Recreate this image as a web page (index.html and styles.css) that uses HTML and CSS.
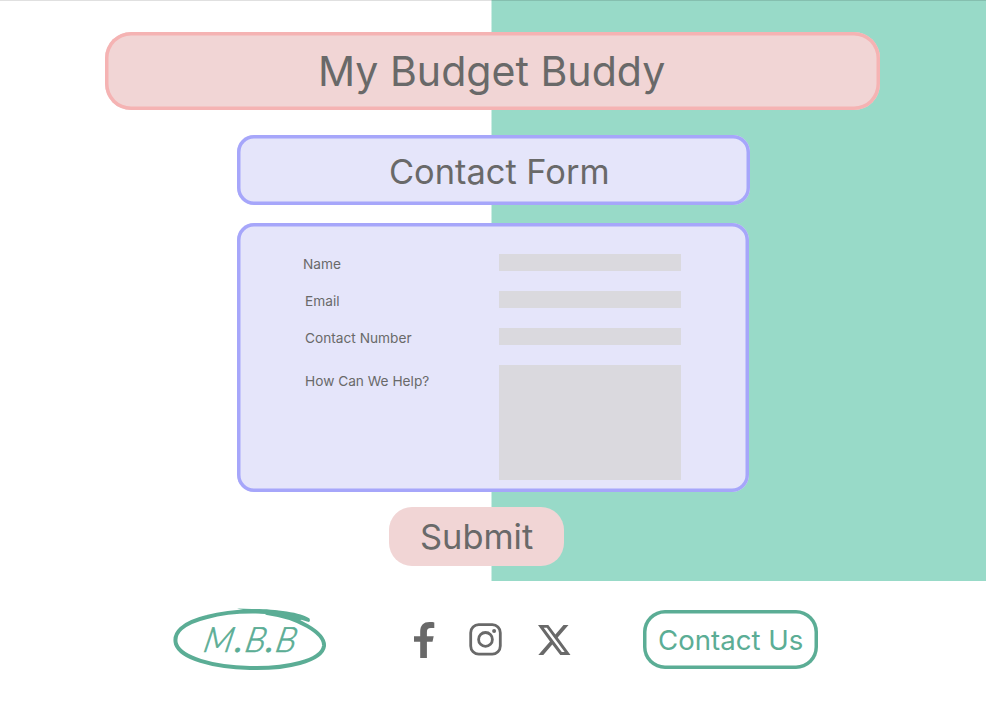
FILE: index.html
```html
<!DOCTYPE html>
<html lang="en">
<head>
<meta charset="utf-8">
<title>My Budget Buddy</title>
<link rel="stylesheet" href="styles.css">
</head>
<body>
<main class="hero">
  <h1 class="panel title"><span>My Budget Buddy</span></h1>
  <h2 class="panel subtitle"><span>Contact Form</span></h2>
  <form class="panel form">
    <label class="row"><span class="label name">Name</span><input class="field" type="text"></label>
    <label class="row"><span class="label email">Email</span><input class="field" type="text"></label>
    <label class="row"><span class="label number">Contact Number</span><input class="field" type="text"></label>
    <label class="row"><span class="label help">How Can We Help?</span><textarea class="field message"></textarea></label>
  </form>
  <button class="submit" type="button"><span>Submit</span></button>
</main>
<footer class="footer">
  <svg class="logo" width="160" height="70" viewBox="170 605 160 70" role="img" aria-label="M.B.B">
    <path class="ring" d="M300 618C278 610 235 609 207 617C182 623 173 633 176 644C181 658 212 667 250 668C286 669 322 661 324 646C325 633 298 617 267 613"/>
    <path class="brush" d="M237 608.5L252 609C270 608.5 302 612 309.5 618.5Q311 623 307 621.5C300 619 296 618 291 618.5C283 615.5 276 614.5 268 614Q249 612 237 608.5Z"/>
    <text class="initials" transform="translate(202 651.5) skewX(-12)"><tspan x="0">M</tspan><tspan class="stop" x="32">.</tspan><tspan x="41.5">B</tspan><tspan class="stop" x="63">.</tspan><tspan x="72">B</tspan></text>
  </svg>
  <nav class="social">
    <svg class="facebook" width="22" height="36" viewBox="0 0 22 36"><path d="M6.2 36V19.8H0v-5.6h6.2V10C6.2 3.3 9.4 0 15.5 0c2.3 0 3.8.1 4.8.4v5.5h-3.4c-3 0-4 1.1-4 4v4.3h6.8l-1.2 5.6h-5.6V36Z"/></svg>
    <svg class="instagram" width="34" height="34" viewBox="0 0 34 34"><rect x="1.7" y="1.7" width="29.6" height="29.4" rx="8"/><circle cx="16.5" cy="16.4" r="6.9"/><circle class="dot" cx="25.1" cy="7.9" r="2"/></svg>
    <svg class="x" width="33" height="30" viewBox="0 0 33 30"><path fill-rule="evenodd" d="M0 0h10.3l7.1 9.4L25.5 0h5L19.7 12.4 32.5 30H22.3l-8-10.4L5.3 30h-5l11.7-13.4ZM5.7 2.8l18.1 24.3h2.9L8.8 2.8Z"/></svg>
  </nav>
  <a class="contact"><span>Contact Us</span></a>
</footer>
</body>
</html>
```

FILE: styles.css
```css
* { box-sizing: border-box; }
body {
  margin: 0;
  width: 986px;
  height: 701px;
  overflow: hidden;
  background: #fff;
  color: #696969;
  font-family: Inter, "Liberation Sans", sans-serif;
  font-weight: 400;
}
.hero {
  display: flex;
  flex-direction: column;
  height: 581px;
  padding-top: 31px;
  border-top: 1px solid rgba(0, 0, 0, .12);
  background: linear-gradient(to right, #fff 491.2px, #98dac8 491.8px) border-box;
}
.panel {
  flex: none;
  margin: 0 0 0 237px;
  border-radius: 17px;
  background: #e5e5fa;
  box-shadow: inset 0 0 0 3.5px #a6a6fa;
  font-weight: 400;
  white-space: nowrap;
}
.title {
  width: 775px;
  height: 78px;
  margin-left: 105px;
  padding: 14px 0 0 213px;
  border-radius: 26px;
  background: #f1d5d5;
  box-shadow: inset 0 0 0 3.5px #f5b3b3;
  font-size: 41.1px;
  line-height: 50px;
}
.subtitle {
  width: 513px;
  height: 70px;
  margin-top: 25px;
  padding: 16px 0 0 152px;
  font-size: 34.4px;
  line-height: 42px;
}
.form {
  display: grid;
  grid-template-rows: 37px 37px 37px 115px;
  width: 512px;
  height: 269px;
  margin-top: 18px;
  padding-top: 31px;
  font-size: 13.7px;
}
.row { display: grid; grid-template-columns: 262px 182px; }
.label { padding-left: 68px; line-height: 20px; }
.name { padding-left: 66px; }
.help { padding-top: 6px; }
.field {
  width: 182px;
  height: 17px;
  padding: 0;
  border: 0;
  border-radius: 0;
  background: #dad9de;
  resize: none;
}
.message { height: 115px; }
.submit {
  flex: none;
  width: 175px;
  height: 59px;
  margin: 15px 0 0 389px;
  padding: 1px 0 0 31px;
  border: 0;
  border-radius: 23px;
  background: #f1d5d5;
  color: #696969;
  font: 400 34.4px/42px Inter, "Liberation Sans", sans-serif;
  text-align: left;
}
.footer { display: flex; height: 120px; padding: 24px 0 0 170px; }
.logo { flex: none; }
.ring { fill: none; stroke: #5bad95; stroke-width: 4; stroke-linecap: round; }
.brush { fill: #5bad95; }
.initials { fill: #5bad95; stroke: #5bad95; stroke-width: .6; font: italic 300 35px Lato, sans-serif; }
.stop { font-weight: 400; }
.social { display: flex; width: 313px; padding: 17px 0 0 84px; fill: #696969; }
.social svg { flex: none; }
.instagram { margin: 1px 0 0 33px; fill: none; stroke: #696969; stroke-width: 2.8; }
.instagram .dot { fill: #696969; stroke: none; }
.x { margin: 3px 0 0 35px; }
.contact {
  width: 175px;
  height: 59px;
  margin-top: 5px;
  padding: 13px 0 0 15px;
  border-radius: 22px;
  box-shadow: inset 0 0 0 3.5px #5bad95;
  color: #5bad95;
  font-size: 27.6px;
  line-height: 34px;
  white-space: nowrap;
}
```
